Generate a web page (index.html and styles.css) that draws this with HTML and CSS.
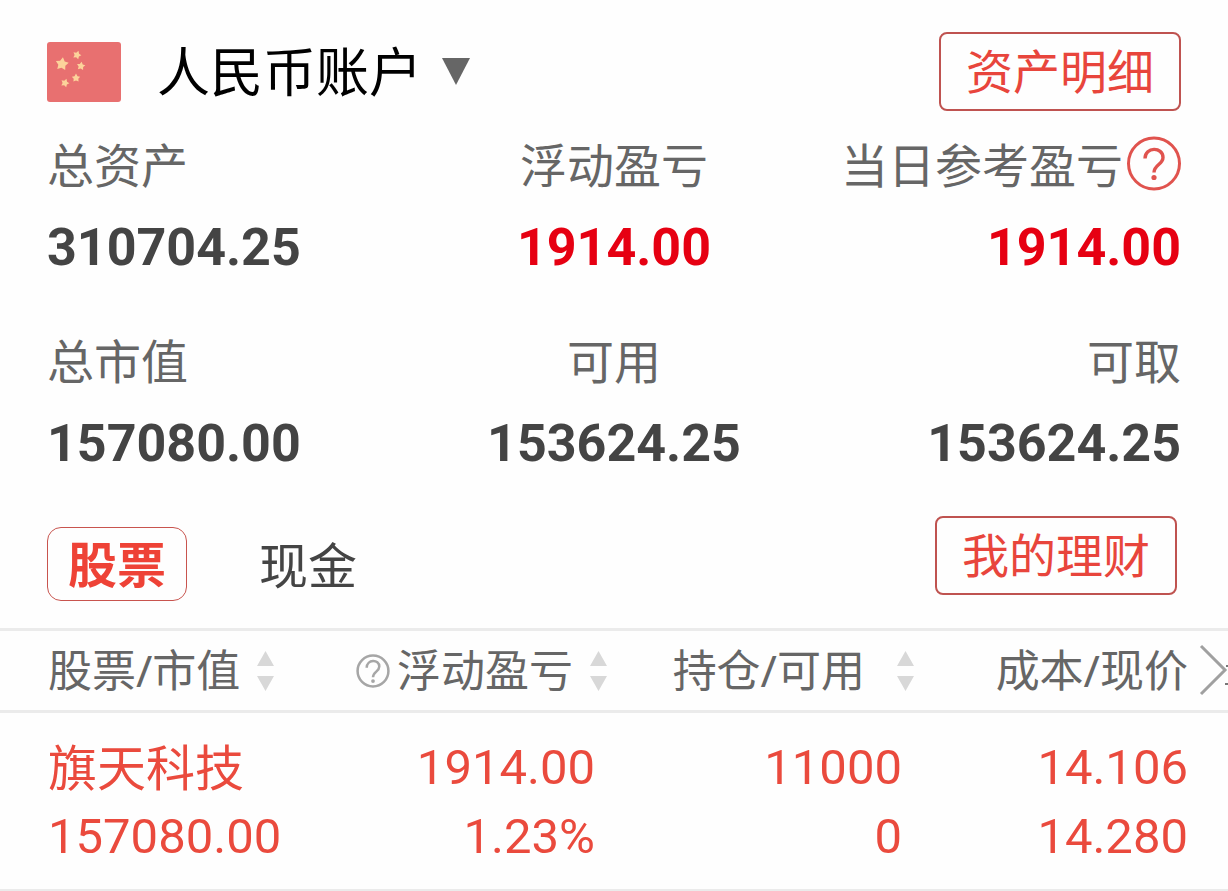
FILE: index.html
```html
<!DOCTYPE html>
<html lang="zh-CN">
<head>
    <meta charset="UTF-8">
    <meta name="viewport" content="width=device-width, initial-scale=1.0">
    <title>人民币账户</title>
    <link rel="stylesheet" href="styles.css">
</head>

<body>
    <main class="account">
        <header class="account-header">
            <svg class="flag" viewBox="0 0 74 60" aria-hidden="true">
                <defs>
                    <polygon id="star" points="0,-10 3.4,-4.2 9.5,-3.1 5.2,1.8 5.9,8.1 0,5.6 -5.9,8.1 -5.2,1.8 -9.5,-3.1 -3.4,-4.2"/>
                </defs>
                <rect width="74" height="60" rx="3" fill="#e87070"/>
                <g fill="#fcd29a">
                    <use href="#star" transform="translate(15 22) rotate(8) scale(.68)"/>
                    <use href="#star" transform="translate(30 13) rotate(20) scale(.44)"/>
                    <use href="#star" transform="translate(34 24) rotate(8) scale(.44)"/>
                    <use href="#star" transform="translate(29 36) scale(.44)"/>
                    <use href="#star" transform="translate(18 41) rotate(20) scale(.44)"/>
                </g>
            </svg>
            <button class="account-switch" type="button">
                人民币账户
                <svg class="caret" viewBox="0 0 28 27" aria-hidden="true"><path d="M0 0h28L14 27z" fill="#666"/></svg>
            </button>
            <button class="btn-outline" type="button">资产明细</button>
        </header>

        <section class="stats">
            <div class="stat">
                <span class="stat-label">总资产</span>
                <strong class="stat-value">310704.25</strong>
            </div>
            <div class="stat center">
                <span class="stat-label">浮动盈亏</span>
                <strong class="stat-value up">1914.00</strong>
            </div>
            <div class="stat right">
                <span class="stat-label">当日参考盈亏
                    <svg class="help" viewBox="0 0 54 54" fill="none" stroke="#e0534e" aria-hidden="true">
                        <circle cx="27" cy="25.500" r="25.500" stroke-width="3"/>
                        <path d="M18 20.500c0-12 18-12 18-1 0 7-9 7-9 15" stroke-width="3.400"/>
                        <circle cx="27" cy="39.500" r="2.600" fill="#e0534e" stroke="none"/>
                    </svg>
                </span>
                <strong class="stat-value up">1914.00</strong>
            </div>
            <div class="stat">
                <span class="stat-label">总市值</span>
                <strong class="stat-value">157080.00</strong>
            </div>
            <div class="stat center">
                <span class="stat-label">可用</span>
                <strong class="stat-value">153624.25</strong>
            </div>
            <div class="stat right">
                <span class="stat-label">可取</span>
                <strong class="stat-value">153624.25</strong>
            </div>
        </section>

        <nav class="tabs">
            <button class="tab active" type="button">股票</button>
            <button class="tab" type="button">现金</button>
            <button class="btn-outline" type="button">我的理财</button>
        </nav>

        <section class="holdings">
            <table>
                <thead>
                    <tr>
                        <th>
                            <button class="sort" type="button">股票/市值
                                <svg class="arrows" viewBox="0 0 17 40" aria-hidden="true"><path d="M8.500 0L17 15H0zM0 25h17L8.500 40z"/></svg>
                            </button>
                        </th>
                        <th>
                            <button class="sort" type="button">
                                <svg class="help-small" viewBox="0 0 54 54" fill="none" stroke="#a6a6a6" aria-hidden="true">
                                    <circle cx="27" cy="27" r="24.500" stroke-width="4"/>
                                    <path d="M17 22c0-14 20-14 20-2 0 8-10 8-10 17" stroke-width="4"/>
                                    <circle cx="27" cy="43" r="3" fill="#a6a6a6" stroke="none"/>
                                </svg>浮动盈亏
                                <svg class="arrows" viewBox="0 0 17 40" aria-hidden="true"><path d="M8.500 0L17 15H0zM0 25h17L8.500 40z"/></svg>
                            </button>
                        </th>
                        <th>
                            <button class="sort wide" type="button">持仓/可用
                                <svg class="arrows" viewBox="0 0 17 40" aria-hidden="true"><path d="M8.500 0L17 15H0zM0 25h17L8.500 40z"/></svg>
                            </button>
                        </th>
                        <th>成本/现价</th>
                    </tr>
                </thead>
                <tbody>
                    <tr>
                        <td><span class="name">旗天科技</span><span>157080.00</span></td>
                        <td><span>1914.00</span><span>1.23%</span></td>
                        <td><span>11000</span><span>0</span></td>
                        <td><span>14.106</span><span>14.280</span></td>
                    </tr>
                </tbody>
            </table>
            <svg class="more" viewBox="0 0 30 52" fill="none" aria-hidden="true">
                <path d="M3 2l24 24L3 50" stroke="#a0a0a0" stroke-width="3"/>
                <path d="M28 22h2M27 40h3" stroke="#777" stroke-width="2"/>
            </svg>
        </section>
    </main>
</body>
</html>
```
FILE: styles.css
```css
* {
    margin: 0;
    padding: 0;
    box-sizing: border-box;
}

body {
    font-family: "Noto Sans", "Noto Sans CJK SC", sans-serif;
    background-color: #fefefe;
    color: #444;
}

button {
    font: inherit;
    color: inherit;
    background: none;
    border: none;
    cursor: pointer;
}

svg {
    display: block;
    flex-shrink: 0;
}

.account {
    padding-top: 32px;
    overflow: hidden;
}

.account-header {
    display: flex;
    align-items: center;
    padding: 0 47px;
}

.flag {
    width: 74px;
    height: 60px;
}

.account-switch {
    display: flex;
    align-items: center;
    gap: 20px;
    margin-left: 36px;
    font-size: 53px;
    line-height: 72px;
    color: #000;
}

.caret {
    width: 28px;
    height: 27px;
}

.btn-outline {
    margin-left: auto;
    padding: 0 25px;
    font-size: 47px;
    line-height: 75px;
    color: #e8453c;
    border: 2px solid #bf5350;
    border-radius: 8px;
}

.stats {
    display: grid;
    grid-template-columns: repeat(3, 1fr);
    row-gap: 57px;
    padding: 26px 47px 0;
}

.stat {
    display: flex;
    flex-direction: column;
    gap: 27px;
    white-space: nowrap;
}

.stat.center {
    align-items: center;
}

.stat.right {
    align-items: flex-end;
}

.stat-label {
    display: flex;
    align-items: center;
    gap: 4px;
    font-size: 47px;
    line-height: 56px;
    color: #666;
}

.stat-value {
    font-family: Roboto, sans-serif;
    font-size: 52px;
    line-height: 56px;
}

.up {
    color: #e60012;
}

.help {
    width: 54px;
    height: 54px;
    overflow: visible;
}

.tabs {
    display: flex;
    align-items: flex-end;
    gap: 52px;
    padding: 44px 51px 27px 47px;
}

.tab {
    padding: 0 20px;
    font-size: 49px;
    line-height: 72px;
}

.tab.active {
    font-weight: bold;
    color: #ee4236;
    border: 1px solid #c8544e;
    border-radius: 14px;
}

.tabs .btn-outline {
    align-self: flex-start;
    margin-bottom: 6px;
}

.holdings {
    position: relative;
}

table {
    width: 100%;
    table-layout: fixed;
    border-collapse: collapse;
}

tr {
    border-bottom: 3px solid #ebebeb;
}

thead tr {
    border-top: 3px solid #ebebeb;
}

th {
    padding-right: 7px;
    font-size: 44px;
    line-height: 79px;
    font-weight: normal;
    text-align: right;
    white-space: nowrap;
    color: #666;
}

td {
    padding: 20px 19px 18px 0;
    font-family: Roboto, sans-serif;
    font-size: 49px;
    line-height: 69px;
    text-align: right;
    white-space: nowrap;
    color: #ea4a3d;
}

th:first-child,
td:first-child {
    padding-left: 48px;
    padding-right: 0;
    text-align: left;
}

th:last-child,
td:last-child {
    padding-right: 40px;
}

td span {
    display: block;
}

.name {
    font-family: "Noto Sans", "Noto Sans CJK SC", sans-serif;
}

.sort {
    display: inline-flex;
    align-items: center;
    gap: 17px;
    vertical-align: top;
}

.sort.wide {
    gap: 32px;
}

.arrows {
    width: 17px;
    height: 40px;
    fill: #d8d8d8;
}

.help-small {
    width: 34px;
    height: 34px;
    margin-right: -10px;
}

/* scroll hint at the edge of the table header */
.more {
    position: absolute;
    top: 16px;
    right: 0;
    width: 30px;
    height: 52px;
}
```
